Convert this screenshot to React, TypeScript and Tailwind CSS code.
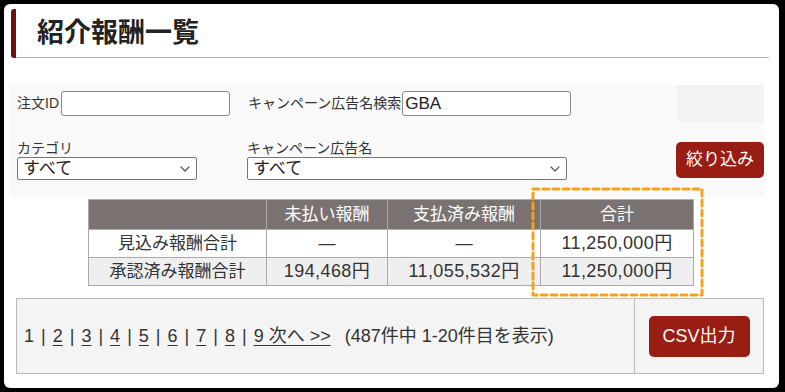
import React from "react";

const font = { fontFamily: '"Liberation Sans", "Noto Sans CJK JP", sans-serif' };

function Chevron() {
  return (
    <svg width="10" height="6" viewBox="0 0 10 6" fill="none" className="shrink-0">
      <path d="M1 1l4 4 4-4" stroke="#555" strokeWidth="1.2" strokeLinecap="round" strokeLinejoin="round" />
    </svg>
  );
}

function FakeSelect({ width }: { width: string }) {
  return (
    <div className={`${width} flex h-[23px] items-center justify-between rounded-[2px] border border-[#777] bg-white pl-[5px] pr-[6px]`}>
      <span className="text-[17px] leading-none text-[#222]">すべて</span>
      <Chevron />
    </div>
  );
}

const pages = ["2", "3", "4", "5", "6", "7", "8"];
const num = "border border-[#aaa] text-[18px] tracking-[0.4px]";

export default function App() {
  return (
    <div style={font} className="h-[392px] w-[785px] bg-black pb-[4px] pl-[4px] pr-[6px] pt-[4px]">
      <div className="relative h-full overflow-hidden rounded-[6px] bg-white">
        {/* title */}
        <div className="ml-[7px] mr-[10px] mt-[5px] flex h-[49px]">
          <div className="w-[5px] rounded-l-[3px] bg-[#6b1212]" />
          <div className="flex flex-1 items-center border-b border-[#b5b5b5] pl-[21px] text-[27px] font-bold text-[#222]">
            紹介報酬一覧
          </div>
        </div>

        {/* filters */}
        <div className="ml-[6px] mt-[27px] h-[112px] w-[754px] bg-[#f9f9f9] pl-[7px] text-[14px] text-[#333]">
          <div className="flex h-[37px] items-center">
            <span>注文ID</span>
            <div className="ml-[2px] h-[25px] w-[169px] rounded-[3px] border border-[#888] bg-white" />
            <span className="ml-[18px]">キャンペーン広告名検索</span>
            <div className="ml-px flex h-[25px] w-[169px] items-center rounded-[3px] border border-[#888] bg-white pl-[2px] text-[17px] text-[#222]">
              GBA
            </div>
            <div className="ml-auto h-[37px] w-[87px] bg-[#f2f2f2]" />
          </div>
          <div className="flex items-start">
            <div className="mt-[17px] flex flex-col">
              <span className="h-[18px] leading-[18px]">カテゴリ</span>
              <FakeSelect width="w-[180px]" />
            </div>
            <div className="ml-[50px] mt-[17px] flex flex-col">
              <span className="h-[18px] leading-[18px]">キャンペーン広告名</span>
              <FakeSelect width="w-[320px]" />
            </div>
            <button className="ml-auto mt-[20px] h-[36px] w-[88px] rounded-[5px] bg-[#9a1d14] text-[17px] text-white">
              絞り込み
            </button>
          </div>
        </div>

        {/* totals table */}
        <table className="ml-[84px] mt-[2px] border-collapse text-[17px] text-[#333]">
          <thead>
            <tr className="h-[30px] bg-[#7a7270] text-white">
              <th className="w-[178px] border border-[#aaa] font-normal" />
              <th className="w-[121px] border border-[#aaa] font-normal">未払い報酬</th>
              <th className="w-[153px] border border-[#aaa] font-normal">支払済み報酬</th>
              <th className="w-[153px] border border-[#aaa] font-normal">合計</th>
            </tr>
          </thead>
          <tbody className="text-center">
            <tr className="h-[28px] bg-white">
              <td className="border border-[#aaa]">見込み報酬合計</td>
              <td className="border border-[#aaa]">—</td>
              <td className="border border-[#aaa]">—</td>
              <td className={num}>11,250,000円</td>
            </tr>
            <tr className="h-[28px] bg-[#efefef]">
              <td className="border border-[#aaa]">承認済み報酬合計</td>
              <td className={num}>194,468円</td>
              <td className={num}>11,055,532円</td>
              <td className={num}>11,250,000円</td>
            </tr>
          </tbody>
        </table>

        {/* highlight */}
        <svg className="absolute left-[527px] top-[183px]" width="173" height="110" viewBox="0 0 173 110">
          <rect x="2" y="2" width="169" height="106" fill="none" stroke="#f4a11c" strokeWidth="3" strokeDasharray="6 4" strokeLinecap="round" />
        </svg>

        {/* pager */}
        <div className="ml-[12px] mt-[12px] flex h-[76px] w-[748px] border border-[#bbb] bg-[#f4f4f4] text-[18px] text-[#333]">
          <div className="flex flex-1 items-center pl-[7px]">
            <span>1</span>
            {pages.map((p) => (
              <React.Fragment key={p}>
                <span className="mx-[7px]">|</span>
                <span className="underline underline-offset-[3px]">{p}</span>
              </React.Fragment>
            ))}
            <span className="mx-[7px]">|</span>
            <span className="underline underline-offset-[3px]">9 次へ &gt;&gt;</span>
            <span className="ml-[14px]">(487件中 1-20件目を表示)</span>
          </div>
          <div className="flex w-[129px] items-center justify-center border-l border-[#bbb]">
            <button className="h-[41px] w-[101px] rounded-[5px] bg-[#9a1d14] text-[18px] text-white">CSV出力</button>
          </div>
        </div>
      </div>
    </div>
  );
}
